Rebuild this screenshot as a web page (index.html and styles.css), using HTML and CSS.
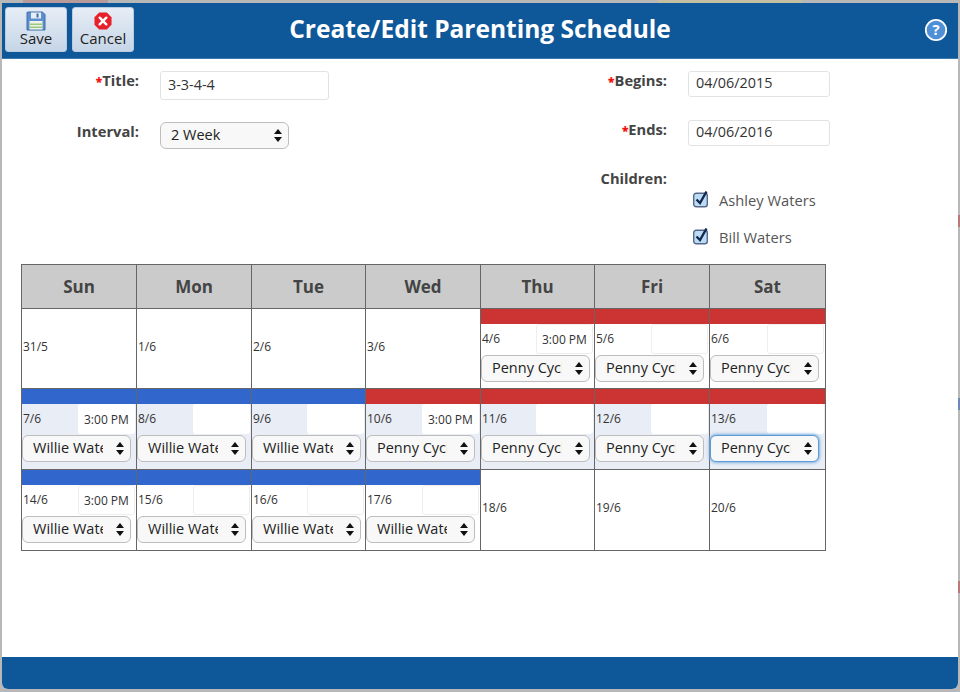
FILE: index.html
```html
<!DOCTYPE html>
<html lang="en">
<head>
    <meta charset="UTF-8">
    <title>Create/Edit Parenting Schedule</title>
    <link rel="stylesheet" href="styles.css">
</head>
<body>
    <div class="peek peek-pink"></div>
    <div class="peek peek-tan"></div>
    <div class="peek peek-side peek-red-1"></div>
    <div class="peek peek-side peek-blue"></div>
    <div class="peek peek-side peek-red-2"></div>

    <div class="window">
        <div class="window-header">
            <div class="toolbar">
                <button class="tool-button">
                    <svg width="20" height="20" viewBox="0 0 20 20">
                        <path d="M1.5 1 H16.5 L19 3.5 V19 H1 V1.500 Z" fill="#5d8fd0" stroke="#3f6cab"/>
                        <rect x="5" y="1.500" width="10" height="6" fill="#e8eef6"/>
                        <rect x="10.500" y="2.500" width="2" height="4" fill="#3f6cab"/>
                        <rect x="3.500" y="10" width="13" height="8.500" fill="#eef3e8"/>
                        <rect x="3.500" y="12.500" width="13" height="1.500" fill="#9cc77e"/>
                        <rect x="3.500" y="15.500" width="13" height="1.500" fill="#9cc77e"/>
                    </svg>
                    <span>Save</span>
                </button>
                <button class="tool-button">
                    <svg class="cancel-icon" width="18" height="18" viewBox="0 0 19 19">
                        <path d="M5.500 0.500 H13.500 L18.500 5.500 V13.500 L13.500 18.500 H5.500 L0.500 13.500 V5.500 Z" fill="#e8202a"/>
                        <path d="M6 6 L13 13 M13 6 L6 13" stroke="#fff" stroke-width="2.600" stroke-linecap="round"/>
                    </svg>
                    <span>Cancel</span>
                </button>
            </div>
            <h1>Create/Edit Parenting Schedule</h1>
            <svg class="help-icon" width="24" height="24" viewBox="0 0 24 24">
                <circle cx="12" cy="12" r="10.200" fill="#4f8fd6" stroke="#fff" stroke-width="1.800"/>
                <text x="12" y="17" text-anchor="middle" class="help-mark">?</text>
            </svg>
        </div>

        <div class="window-content">
            <div class="form">
                <div class="form-col form-left">
                    <div class="field field-title">
                        <label><b>*</b>Title:</label>
                        <input class="text-input title-input" type="text" value="3-3-4-4">
                    </div>
                    <div class="field field-interval">
                        <label>Interval:</label>
                        <div class="pick pick-interval">
                            <select><option>2 Week</option></select>
                        </div>
                    </div>
                </div>
                <div class="form-col form-right">
                    <div class="field field-date">
                        <label><b>*</b>Begins:</label>
                        <input class="text-input date-input" type="text" value="04/06/2015">
                    </div>
                    <div class="field field-date">
                        <label><b>*</b>Ends:</label>
                        <input class="text-input date-input" type="text" value="04/06/2016">
                    </div>
                    <div class="field field-children">
                        <label>Children:</label>
                    </div>
                    <div class="child">
                        <svg width="18" height="18" viewBox="0 0 18 18">
                            <rect x="1.700" y="3.200" width="13.600" height="13.600" rx="2.500" fill="#bcdcf6" stroke="#58688a" stroke-width="1.400"/>
                            <path d="M4.500 9.500 L8 13 L14.500 1.500" fill="none" stroke="#13294f" stroke-width="2.400"/>
                        </svg>
                        <span>Ashley Waters</span>
                    </div>
                    <div class="child">
                        <svg width="18" height="18" viewBox="0 0 18 18">
                            <rect x="1.700" y="3.200" width="13.600" height="13.600" rx="2.500" fill="#bcdcf6" stroke="#58688a" stroke-width="1.400"/>
                            <path d="M4.500 9.500 L8 13 L14.500 1.500" fill="none" stroke="#13294f" stroke-width="2.400"/>
                        </svg>
                        <span>Bill Waters</span>
                    </div>
                </div>
            </div>

            <div class="calendar">
                <div class="day-name">Sun</div>
                <div class="day-name">Mon</div>
                <div class="day-name">Tue</div>
                <div class="day-name">Wed</div>
                <div class="day-name">Thu</div>
                <div class="day-name">Fri</div>
                <div class="day-name">Sat</div>

                <div class="cell empty">31/5</div>
                <div class="cell empty">1/6</div>
                <div class="cell empty">2/6</div>
                <div class="cell empty">3/6</div>
                <div class="cell red plain">
                    <div class="bar"></div>
                    <div class="cell-top"><span class="date">4/6</span><input class="time" type="text" value="3:00 PM"></div>
                    <div class="pick"><select><option>Penny Cycle</option></select></div>
                </div>
                <div class="cell red plain">
                    <div class="bar"></div>
                    <div class="cell-top"><span class="date">5/6</span><input class="time" type="text"></div>
                    <div class="pick"><select><option>Penny Cycle</option></select></div>
                </div>
                <div class="cell red plain">
                    <div class="bar"></div>
                    <div class="cell-top"><span class="date">6/6</span><input class="time" type="text"></div>
                    <div class="pick"><select><option>Penny Cycle</option></select></div>
                </div>

                <div class="cell blue">
                    <div class="bar"></div>
                    <div class="cell-top"><span class="date">7/6</span><input class="time" type="text" value="3:00 PM"></div>
                    <div class="pick"><select><option>Willie Waters</option></select></div>
                </div>
                <div class="cell blue">
                    <div class="bar"></div>
                    <div class="cell-top"><span class="date">8/6</span><input class="time" type="text"></div>
                    <div class="pick"><select><option>Willie Waters</option></select></div>
                </div>
                <div class="cell blue">
                    <div class="bar"></div>
                    <div class="cell-top"><span class="date">9/6</span><input class="time" type="text"></div>
                    <div class="pick"><select><option>Willie Waters</option></select></div>
                </div>
                <div class="cell red">
                    <div class="bar"></div>
                    <div class="cell-top"><span class="date">10/6</span><input class="time" type="text" value="3:00 PM"></div>
                    <div class="pick"><select><option>Penny Cycle</option></select></div>
                </div>
                <div class="cell red">
                    <div class="bar"></div>
                    <div class="cell-top"><span class="date">11/6</span><input class="time" type="text"></div>
                    <div class="pick"><select><option>Penny Cycle</option></select></div>
                </div>
                <div class="cell red">
                    <div class="bar"></div>
                    <div class="cell-top"><span class="date">12/6</span><input class="time" type="text"></div>
                    <div class="pick"><select><option>Penny Cycle</option></select></div>
                </div>
                <div class="cell red">
                    <div class="bar"></div>
                    <div class="cell-top"><span class="date">13/6</span><input class="time" type="text"></div>
                    <div class="pick pick-focus"><select><option>Penny Cycle</option></select></div>
                </div>

                <div class="cell blue plain">
                    <div class="bar"></div>
                    <div class="cell-top"><span class="date">14/6</span><input class="time" type="text" value="3:00 PM"></div>
                    <div class="pick"><select><option>Willie Waters</option></select></div>
                </div>
                <div class="cell blue plain">
                    <div class="bar"></div>
                    <div class="cell-top"><span class="date">15/6</span><input class="time" type="text"></div>
                    <div class="pick"><select><option>Willie Waters</option></select></div>
                </div>
                <div class="cell blue plain">
                    <div class="bar"></div>
                    <div class="cell-top"><span class="date">16/6</span><input class="time" type="text"></div>
                    <div class="pick"><select><option>Willie Waters</option></select></div>
                </div>
                <div class="cell blue plain">
                    <div class="bar"></div>
                    <div class="cell-top"><span class="date">17/6</span><input class="time" type="text"></div>
                    <div class="pick"><select><option>Willie Waters</option></select></div>
                </div>
                <div class="cell empty">18/6</div>
                <div class="cell empty">19/6</div>
                <div class="cell empty">20/6</div>
            </div>
        </div>

        <div class="window-footer"></div>
    </div>
</body>
</html>
```

FILE: styles.css
```css
* {
    box-sizing: border-box;
}

html,
body {
    height: 100%;
}

body {
    position: relative;
    margin: 0;
    padding: 3px 2px;
    font-family: "Open Sans", sans-serif;
    background-color: #b8b8b8;
    color: #333;
    overflow: hidden;
}

/* bits of the page behind the dialog */
.peek {
    position: absolute;
}

.peek-pink {
    top: 0;
    left: 23px;
    width: 85px;
    height: 3px;
    background-color: #b89a9a;
}

.peek-tan {
    top: 0;
    left: 658px;
    width: 144px;
    height: 3px;
    background-color: #c4bfa0;
}

.peek-side {
    right: 0;
    width: 2px;
}

.peek-red-1 {
    top: 215px;
    height: 12px;
    background-color: #b87a7a;
}

.peek-blue {
    top: 398px;
    height: 12px;
    background-color: #6f88b8;
}

.peek-red-2 {
    top: 581px;
    height: 12px;
    background-color: #b87a7a;
}

.window {
    position: relative;
    height: 686px;
    display: flex;
    flex-direction: column;
    background-color: #fff;
    border-radius: 0 0 6px 6px;
    overflow: hidden;
}

.window-header {
    height: 56px;
    flex: none;
    display: grid;
    grid-template-columns: 1fr auto 1fr;
    align-items: center;
    padding: 4px 3px 6px;
    background-color: #0e5799;
    border-bottom: 1px solid #3d7ab0;
}

.toolbar {
    display: flex;
    gap: 5px;
}

.tool-button {
    width: 62px;
    height: 45px;
    display: flex;
    flex-direction: column;
    align-items: center;
    justify-content: flex-start;
    padding: 3px 0 0;
    border: 1px solid #b9cbde;
    border-radius: 3px;
    background: linear-gradient(#e6edf5, #c6d6e8);
    font-family: "Open Sans", sans-serif;
    font-size: 15px;
    line-height: 18px;
    color: #222;
}

.tool-button svg {
    display: block;
}

.tool-button span {
    margin-top: -2px;
}

.tool-button .cancel-icon {
    margin: 1px 0;
}

.window-header h1 {
    margin: 0 0 2px;
    text-align: center;
    font-size: 24.500px;
    font-weight: 700;
    color: #fff;
}

.help-icon {
    justify-self: end;
    margin-right: 7px;
}

.help-mark {
    font-family: "Open Sans", sans-serif;
    font-size: 15px;
    font-weight: 700;
    fill: #fff;
}

.window-content {
    flex: 1;
    padding-left: 19px;
}

.form {
    height: 205px;
    display: flex;
}

.form-col {
    display: flex;
    flex-direction: column;
    padding-top: 12px;
}

.form-left {
    width: 540px;
}

.field {
    display: flex;
    align-items: flex-start;
}

.field label {
    flex: none;
    margin-right: 21px;
    text-align: right;
    font-size: 14.700px;
    font-weight: 700;
    line-height: 19px;
    color: #444;
}

.field label b {
    font-size: 12px;
    color: #f01010;
}

.form-left label {
    width: 118px;
}

.form-right label {
    width: 106px;
}

.field-title {
    height: 51px;
}

.field-date {
    height: 49px;
}

.field-children {
    height: 22px;
}

.text-input {
    padding: 0 7px 3px;
    border: 1px solid #e2e2e2;
    border-radius: 3px;
    background-color: #fff;
    font-family: "Open Sans", sans-serif;
    font-size: 14.400px;
    color: #333;
}

.title-input {
    width: 169px;
    height: 29px;
}

.date-input {
    width: 142px;
    height: 26px;
}

.child {
    height: 37px;
    display: flex;
    align-items: flex-start;
    gap: 9px;
    margin-left: 131px;
    font-size: 14.700px;
    line-height: 20px;
    color: #555;
}

.pick {
    position: relative;
    width: 109px;
}

.pick select {
    display: block;
    width: 100%;
    height: 27px;
    padding: 0 27px 2px 10px;
    appearance: none;
    border: 1px solid #bdbdbd;
    border-radius: 6px;
    background-color: #f8f8f8;
    font-family: "Open Sans", sans-serif;
    font-size: 14.500px;
    color: #222;
}

.pick::before,
.pick::after {
    content: "";
    position: absolute;
    right: 7px;
    border-left: 4px solid transparent;
    border-right: 4px solid transparent;
}

.pick::before {
    top: 7px;
    border-bottom: 5px solid #111;
}

.pick::after {
    top: 15px;
    border-top: 5px solid #111;
}

.pick-interval {
    width: 129px;
}

.pick-focus select {
    border: 1px solid #5d9ad6;
    box-shadow: 0 0 3px 1px #7db0e0;
}

.calendar {
    width: 805px;
    display: grid;
    grid-template-columns: 115px 115px 114px 115px 114px 115px 116px;
    grid-template-rows: 44px 80px 81px 81px;
    border-top: 1px solid #666;
    border-left: 1px solid #666;
}

.day-name {
    display: flex;
    align-items: center;
    justify-content: center;
    background-color: #cbcbcb;
    border-right: 1px solid #666;
    border-bottom: 1px solid #666;
    font-size: 17px;
    font-weight: 700;
    color: #444;
}

.cell {
    min-width: 0;
    border-right: 1px solid #666;
    border-bottom: 1px solid #666;
    font-size: 12px;
    color: #333;
    background-color: #e9edf5;
}

.cell.empty {
    display: flex;
    align-items: center;
    padding: 0 0 5px 1px;
    background-color: #fff;
}

.cell.plain {
    background-color: #fff;
}

.bar {
    height: 15px;
}

.blue .bar {
    background-color: #3166cc;
}

.red .bar {
    background-color: #cc3333;
}

.cell-top {
    display: flex;
    align-items: flex-start;
    justify-content: space-between;
    height: 31px;
    padding: 0 1px;
}

.date {
    margin-top: 6px;
}

.time {
    width: 57px;
    height: 30px;
    padding: 1px 0 0 6px;
    border: 0;
    border-radius: 3px;
    background-color: #fff;
    font-family: "Open Sans", sans-serif;
    font-size: 12px;
    color: #333;
}

.plain .time {
    border: 1px solid #eee;
    padding-left: 5px;
}

.window-footer {
    height: 32px;
    flex: none;
    background-color: #0e5799;
}
```
